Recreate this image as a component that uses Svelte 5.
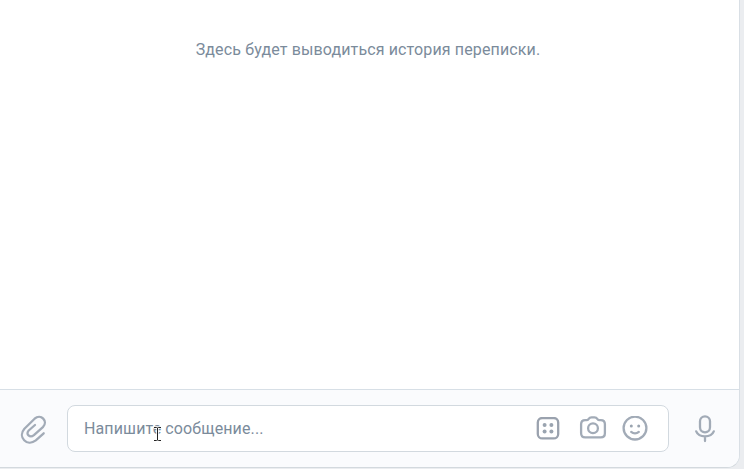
<script>
  let message = $state('');
</script>

<main class="page">
  <section class="chat">
    <div class="history"><p>Здесь будет выводиться история переписки.</p></div>
    <footer class="composer">
      <button class="attach" aria-label="Прикрепить">
        <svg width="28" height="32" viewBox="0 0 28 32">
          <path d="M23.7 19.3 15.8 26.4C7.2 33-2.8 23.2 4.4 14.8L14.6 4.7C20.8-.9 28.6 7.2 22.9 13.1L13.9 21.2C9.8 24.4 5.3 20 8.7 16.5L15 11" />
        </svg>
      </button>
      <div class="field">
        <input bind:value={message} placeholder="Напишите сообщение..." aria-label="Сообщение" />
        <button class="bots" aria-label="Клавиатура">
          <svg width="24" height="24" viewBox="0 0 24 24">
            <rect x="1.8" y="1" width="20.4" height="20.4" rx="4.5" />
            <g class="dots"><circle cx="8.6" cy="7.9" r="2" /><circle cx="15.4" cy="7.9" r="2" /><circle cx="8.6" cy="14.6" r="2" /><circle cx="15.4" cy="14.6" r="2" /></g>
          </svg>
        </button>
        <button class="camera" aria-label="Фото">
          <svg width="28" height="26" viewBox="0 0 28 26">
            <path d="M6.2 4.2h1.2c1.2 0 1.6-.3 2.3-1.4.8-1.2 1.4-1.4 2.8-1.4h3c1.4 0 2 .2 2.8 1.4.7 1.1 1.1 1.4 2.3 1.4h1.2c2.8 0 4.1 1.4 4.1 4.1v9c0 2.7-1.3 4.1-4.1 4.1H6.2c-2.8 0-4.1-1.4-4.1-4.1v-9c0-2.7 1.3-4.1 4.1-4.1Z" />
            <circle cx="14" cy="12.2" r="4.9" />
          </svg>
        </button>
        <button class="smile" aria-label="Смайлик">
          <svg width="26" height="26" viewBox="0 0 26 26">
            <circle cx="13" cy="12.1" r="11.4" />
            <g class="dots"><circle cx="9.3" cy="10" r="1.5" /><circle cx="16.7" cy="10" r="1.5" /></g>
            <path d="M9.2 15.9c2.2 1.9 5.4 1.9 7.6 0" />
          </svg>
        </button>
        <svg class="cursor" width="9" height="16" viewBox="0 0 9 16" aria-hidden="true">
          <path class="halo" d="M1.5 1.5h2l1 1 1-1h2M4.5 2v12M1.5 14.5h2l1-1 1 1h2" />
          <path class="beam" d="M1.5 1.5h2l1 1 1-1h2M4.5 2v12M1.5 14.5h2l1-1 1 1h2" />
        </svg>
      </div>
      <button class="mic" aria-label="Голосовое сообщение">
        <svg width="22" height="28" viewBox="0 0 22 28">
          <rect x="6" y="1.3" width="10" height="16" rx="5" />
          <path d="M2.2 16.4c1.3 3.2 4.6 5 8.8 5s7.5-1.8 8.8-5M11 21.6V26" />
        </svg>
      </button>
    </footer>
  </section>
</main>

<style>
  :global(body) { background: #ebedf0; }
  .page { width: 744px; height: 469px; overflow: hidden; }
  .chat {
    box-sizing: border-box;
    width: 740px;
    height: 468px;
    display: flex;
    flex-direction: column;
    overflow: hidden;
    background: #fff;
    border-right: 1px solid #d9dfe5;
    border-bottom: 1px solid #d3d9de;
    border-radius: 0 0 13px 0;
  }
  .history { flex: 1; padding-top: 38px; }
  p {
    width: 736px;
    margin: 0;
    text-align: center;
    font: 16px/23px Roboto, sans-serif;
    letter-spacing: .13px;
    color: #7b8b9b;
  }
  .composer {
    box-sizing: border-box;
    height: 78px;
    display: flex;
    align-items: center;
    padding: 0 23px 0 20px;
    border-top: 1px solid #d7dfe6;
    background: #fafbfd;
  }
  button {
    flex: none;
    display: flex;
    margin: 0;
    padding: 0;
    border: 0;
    background: none;
  }
  svg {
    display: block;
    fill: none;
    stroke: #a2abb7;
    stroke-width: 2.3;
    stroke-linecap: round;
    stroke-linejoin: round;
  }
  .bots svg { stroke: #9aa2ae; }
  .dots { fill: #9aa4b0; stroke: none; }
  .attach { margin: 3px 19px 0 0; }
  .field {
    position: relative;
    box-sizing: border-box;
    flex: none;
    width: 602px;
    height: 47px;
    display: flex;
    align-items: center;
    padding: 0 20px 0 16px;
    border: 1px solid #d2d9df;
    border-radius: 8px;
    background: #fff;
  }
  input {
    flex: 1;
    min-width: 0;
    height: 30px;
    padding: 0;
    border: 0;
    outline: 0;
    background: none;
    font: 16px/24px Roboto, sans-serif;
    letter-spacing: .12px;
  }
  input::placeholder { color: #7b8b9b; opacity: 1; }
  .bots { margin-right: 19px; }
  .camera { margin-right: 15px; }
  .mic { margin-left: 25px; }
  .cursor { position: absolute; left: 85px; top: 20px; }
  .halo { stroke: #fff; stroke-width: 2.6; }
  .beam { stroke: #222; stroke-width: 1; stroke-linecap: square; }
</style>
